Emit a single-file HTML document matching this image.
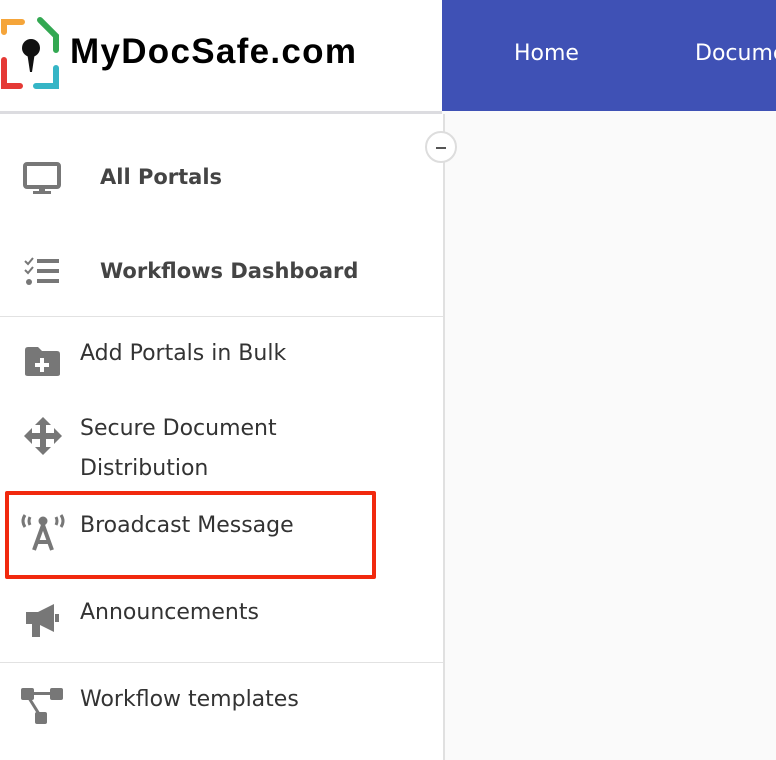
<!DOCTYPE html>
<html><head><style>
body{margin:0;width:776px;height:760px;overflow:hidden;background:#fafafa;font-family:"DejaVu Sans",sans-serif;position:relative}
.hdr{position:absolute;left:0;top:0;width:442px;height:111px;background:#fff;border-bottom:3px solid #dcdce0}
.nav{position:absolute;left:442px;top:0;width:334px;height:111px;background:#3f51b5;color:#fff;font-size:22px;overflow:hidden}
.nav span{position:absolute;top:41px;white-space:nowrap}
.side{position:absolute;left:0;top:114px;width:443px;height:646px;background:#fff;border-right:2px solid #e0e0e0}
.t{position:absolute;color:#333;font-size:22px;white-space:nowrap}
.b{font-weight:bold;color:#444;font-size:21px}
.hr{position:absolute;left:0;width:443px;height:1px;background:#e2e2e2}
.ic{position:absolute}
</style></head><body>
<div class="hdr">
<svg class="ic" style="left:0;top:16px" width="62" height="74" viewBox="0 0 62 74">
<path d="M4 16 V6 H22" stroke="#f5a53a" stroke-width="6" fill="none" stroke-linecap="round"/>
<path d="M40 4 L56 20 V34" stroke="#33a852" stroke-width="6" fill="none" stroke-linecap="round"/>
<path d="M4 44 V70 H20" stroke="#e53935" stroke-width="6" fill="none" stroke-linecap="round"/>
<path d="M36 70 H56 V52" stroke="#35b5c6" stroke-width="6" fill="none" stroke-linecap="round"/>
<circle cx="31" cy="32" r="9" fill="#111"/><path d="M27 36 L30 56 H32 L35 36Z" fill="#111"/>
</svg>
<div class="t" style="left:70px;top:32px;font-size:35px;font-weight:bold;color:#000;font-family:'Liberation Sans',sans-serif;letter-spacing:1.3px">MyDocSafe.com</div>
</div>
<div class="nav"><span style="left:72px">Home</span><span style="left:253px">Documents</span></div>
<div class="side">
<div class="hr" style="top:202px"></div>
<div class="hr" style="top:548px"></div>
</div>
<div style="position:absolute;left:425px;top:131px;width:32px;height:32px;border:2px solid #ddd;border-radius:50%;background:#fff;box-sizing:border-box"><div style="position:absolute;left:9px;top:14px;width:10px;height:2px;background:#555"></div></div>
<svg class="ic" style="left:23px;top:162px" width="40" height="34"><rect x="2" y="2" width="34" height="23" rx="2" stroke="#777" stroke-width="4" fill="none"/><rect x="16" y="25" width="6" height="5" fill="#777"/><rect x="10" y="29" width="18" height="3" fill="#777"/></svg>
<div class="t b" style="left:100px;top:165px">All Portals</div>
<svg class="ic" style="left:24px;top:257px" width="38" height="30" fill="#777"><path d="M1 4 l3 3 5-6" stroke="#777" stroke-width="2" fill="none"/><path d="M1 13 l3 3 5-6" stroke="#777" stroke-width="2" fill="none"/><circle cx="5" cy="25" r="3"/><rect x="13" y="2" width="22" height="4"/><rect x="13" y="12" width="22" height="4"/><rect x="13" y="22" width="22" height="4"/></svg>
<div class="t b" style="left:100px;top:259px">Workflows Dashboard</div>
<svg class="ic" style="left:25px;top:347px" width="36" height="30"><path d="M0 3 Q0 0 3 0 H13 L17 4 H32 Q35 4 35 7 V27 Q35 29 32 29 H3 Q0 29 0 27Z" fill="#777"/><rect x="15" y="11" width="4" height="14" fill="#fff"/><rect x="10" y="16" width="14" height="4" fill="#fff"/></svg>
<div class="t" style="left:80px;top:341px">Add Portals in Bulk</div>
<svg class="ic" style="left:24px;top:417px" width="38" height="38" fill="#777"><path d="M19 0 L27 8 H22 V16 H30 V11 L38 19 L30 27 V22 H22 V30 H27 L19 38 L11 30 H16 V22 H8 V27 L0 19 L8 11 V16 H16 V8 H11Z"/></svg>
<div class="t" style="left:80px;top:416px">Secure Document</div>
<div class="t" style="left:80px;top:456px">Distribution</div>
<div style="position:absolute;left:5px;top:491px;width:371px;height:88px;border:4px solid #f1290e;box-sizing:border-box;border-radius:2px"></div>
<svg class="ic" style="left:20px;top:510px" width="46" height="42" fill="none" stroke="#777" stroke-width="3"><path d="M5 5 Q1 11 5 17"/><path d="M10 7 Q8 11 10 15"/><path d="M41 5 Q45 11 41 17"/><path d="M36 7 Q38 11 36 15"/><circle cx="23" cy="11" r="3" fill="#777"/><path d="M14 40 L23 15 L32 40 M17 32 H29" stroke-width="4"/></svg>
<div class="t" style="left:80px;top:513px">Broadcast Message</div>
<svg class="ic" style="left:24px;top:603px" width="38" height="36" fill="#777"><path d="M2 9 H14 L30 1 V29 L14 21 H2Z"/><rect x="8" y="20" width="8" height="14"/><rect x="31" y="11" width="4" height="8"/></svg>
<div class="t" style="left:80px;top:600px">Announcements</div>
<svg class="ic" style="left:21px;top:688px" width="44" height="38" fill="#777"><rect x="0" y="0" width="13" height="12" rx="2"/><rect x="29" y="0" width="13" height="12" rx="2"/><rect x="14" y="24" width="12" height="12" rx="2"/><rect x="12" y="4" width="18" height="3"/><path d="M8 10 L18 26" stroke="#777" stroke-width="3"/></svg>
<div class="t" style="left:80px;top:687px">Workflow templates</div>
</body></html>
